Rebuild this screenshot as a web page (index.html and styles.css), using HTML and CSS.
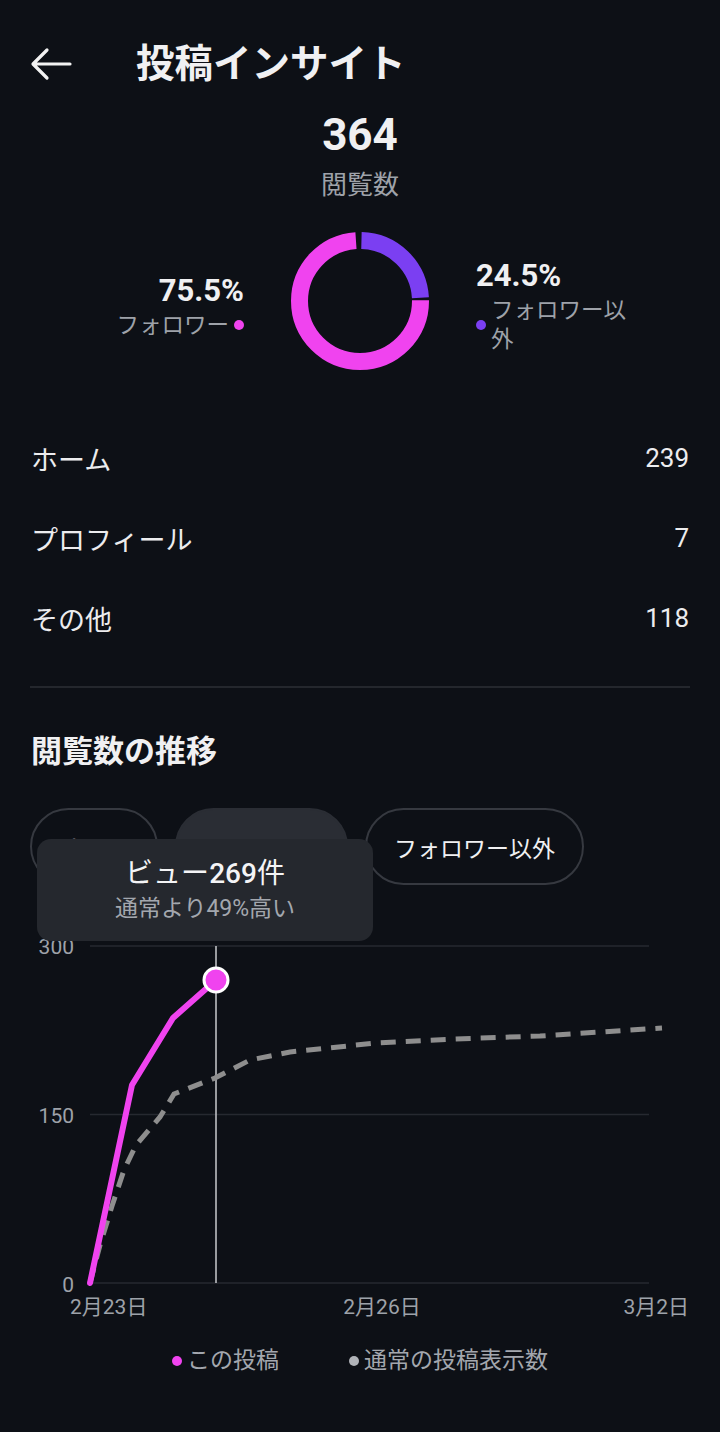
FILE: index.html
```html
<!DOCTYPE html>
<html lang="ja">
<head>
<meta charset="utf-8">
<title>投稿インサイト</title>
<link rel="stylesheet" href="styles.css">
</head>
<body>
<header class="header">
  <span class="back">
    <svg width="44" height="44" viewBox="0 0 44 44"><path d="M40 22H4M17 8L3 22l14 14" fill="none" stroke="#f2f2f2" stroke-width="3.2" stroke-linecap="round" stroke-linejoin="round"/></svg>
  </span>
  <h1 class="title">投稿インサイト</h1>
</header>

<section class="total">
  <div class="total-num">364</div>
  <div class="total-label">閲覧数</div>
</section>

<section class="split">
  <div class="side side-left">
    <div class="pct">75.5%</div>
    <div class="legend-row"><span class="lbl">フォロワー</span><span class="dot dot-pink"></span></div>
  </div>
  <svg class="donut" width="142" height="142" viewBox="0 0 142 142">
    <g transform="rotate(-90 71 71)">
      <circle cx="71" cy="71" r="60.5" fill="none" stroke="#f043ef" stroke-width="17" stroke-dasharray="281.3 380.1" stroke-dashoffset="-94.1"/>
      <circle cx="71" cy="71" r="60.5" fill="none" stroke="#7b3ff2" stroke-width="17" stroke-dasharray="90.1 380.1" stroke-dashoffset="-1.5"/>
    </g>
  </svg>
  <div class="side side-right">
    <div class="pct">24.5%</div>
    <div class="legend-row"><span class="dot dot-purple"></span><span class="lbl lbl-wrap">フォロワー以外</span></div>
  </div>
</section>

<section class="rows">
  <div class="row"><span>ホーム</span><span class="num">239</span></div>
  <div class="row"><span>プロフィール</span><span class="num">7</span></div>
  <div class="row"><span>その他</span><span class="num">118</span></div>
</section>

<hr class="divider">

<section class="trend">
  <h2 class="trend-title">閲覧数の推移</h2>
  <div class="chips">
    <span class="chip chip-first">すべて</span>
    <span class="chip chip-active">フォロワー</span>
    <span class="chip">フォロワー以外</span>
  </div>
  <svg class="chart" width="720" height="400" viewBox="0 0 720 400">
    <g stroke="#262930" stroke-width="1.5">
      <line x1="90" y1="16" x2="649" y2="16"/>
      <line x1="90" y1="184.5" x2="649" y2="184.5"/>
      <line x1="90" y1="353" x2="649" y2="353"/>
    </g>
    <g class="axis" fill="#9ea2a9" font-size="21">
      <text x="74" y="24" text-anchor="end">300</text>
      <text x="74" y="193" text-anchor="end">150</text>
      <text x="74" y="362" text-anchor="end">0</text>
      <text x="70" y="384">2月23日</text>
      <text x="382" y="384" text-anchor="middle">2月26日</text>
      <text x="689" y="384" text-anchor="end">3月2日</text>
    </g>
    <line x1="216" y1="16" x2="216" y2="353" stroke="#c9cace" stroke-width="1.5"/>
    <polyline points="90,353 100,315 112,276 124,240 136,215 160,187 174,164 215,148 250,130 290,122 376,113 454,109 540,106 662,98" fill="none" stroke="#8e8e8e" stroke-width="5" stroke-dasharray="15 10"/>
    <polyline points="90,353 132,155 173,88 216,50" fill="none" stroke="#f043ef" stroke-width="6" stroke-linejoin="round" stroke-linecap="round"/>
    <circle cx="216" cy="50" r="12" fill="#f043ef" stroke="#ffffff" stroke-width="3"/>
  </svg>
  <div class="tooltip">
    <div class="tip-main">ビュー<span class="tip-num">269</span>件</div>
    <div class="tip-sub">通常より49%高い</div>
  </div>
  <div class="legend">
    <span class="legend-item"><span class="dot dot-pink"></span>この投稿</span>
    <span class="legend-item"><span class="dot dot-gray"></span>通常の投稿表示数</span>
  </div>
</section>
</body>
</html>
```

FILE: styles.css
```css
* { box-sizing: border-box; }
html, body { margin: 0; padding: 0; }
body {
  width: 720px;
  height: 1432px;
  background: #0d1016;
  color: #f0f0f2;
  font-family: "Roboto", "Noto Sans CJK JP", sans-serif;
  overflow: hidden;
}

.header {
  display: flex;
  align-items: center;
  padding: 42px 0 0 30px;
  height: 86px;
}
.back { display: flex; width: 44px; height: 44px; }
.title {
  margin: 0 0 0 62px;
  font-size: 38.5px;
  font-weight: 700;
  line-height: 44px;
}

.total { text-align: center; margin-top: 24px; }
.total-num { font-size: 44px; font-weight: 700; line-height: 50px; }
.total-label { font-size: 26px; line-height: 34px; color: #9ea2a9; margin-top: 8px; }

.split {
  display: grid;
  grid-template-columns: 1fr auto 1fr;
  column-gap: 45px;
  align-items: center;
  margin-top: 28px;
}
.donut { display: block; }
.side-left { display: flex; flex-direction: column; align-items: flex-end; padding-top: 10px; }
.side-right { display: flex; flex-direction: column; align-items: flex-start; padding-top: 10px; }
.pct { font-size: 31px; font-weight: 700; line-height: 36px; }
.legend-row { display: flex; align-items: center; gap: 5px; margin-top: 2px; }
.lbl { font-size: 22.5px; line-height: 29px; color: #9ea2a9; }
.lbl-wrap { width: 142px; }
.dot { display: inline-block; width: 10px; height: 10px; border-radius: 50%; flex: none; }
.dot-pink { background: #f043ef; }
.dot-purple { background: #7b3ff2; }
.dot-gray { background: #b0b3b8; }

.rows { margin-top: 46px; padding: 0 31px; }
.row {
  display: flex;
  justify-content: space-between;
  align-items: center;
  height: 80px;
  font-size: 27px;
  color: #ececee;
}
.num { font-size: 26px; }

.divider {
  margin: 28px 30px 0;
  border: 0;
  height: 2px;
  background: #24272d;
}

.trend { position: relative; }
.trend-title {
  margin: 44px 0 0 31px;
  font-size: 31px;
  font-weight: 700;
  line-height: 40px;
}
.chips { display: flex; gap: 17px; margin: 36px 0 0 30px; }
.chip {
  display: flex;
  align-items: center;
  justify-content: center;
  height: 77px;
  padding: 0 27px;
  border: 2px solid #363940;
  border-radius: 39px;
  font-size: 23px;
  color: #f0f0f2;
}
.chip-first { min-width: 128px; }
.chip-active { background: #2a2d34; border-color: #2a2d34; }

.chart { display: block; margin-top: 45px; }

.tooltip {
  position: absolute;
  left: 37px;
  top: 107px;
  width: 336px;
  height: 102px;
  background: #25282e;
  border-radius: 14px;
  text-align: center;
  padding-top: 16px;
}
.tip-main { font-size: 28px; line-height: 38px; color: #f4f4f6; }
.tip-num { font-weight: 500; }
.tip-sub { font-size: 23px; line-height: 32px; color: #a3a7ae; }

.legend {
  display: flex;
  justify-content: center;
  gap: 70px;
  margin-top: 16px;
  font-size: 23px;
  line-height: 30px;
  color: #a3a7ae;
}
.legend-item { display: flex; align-items: center; gap: 5px; }
```
